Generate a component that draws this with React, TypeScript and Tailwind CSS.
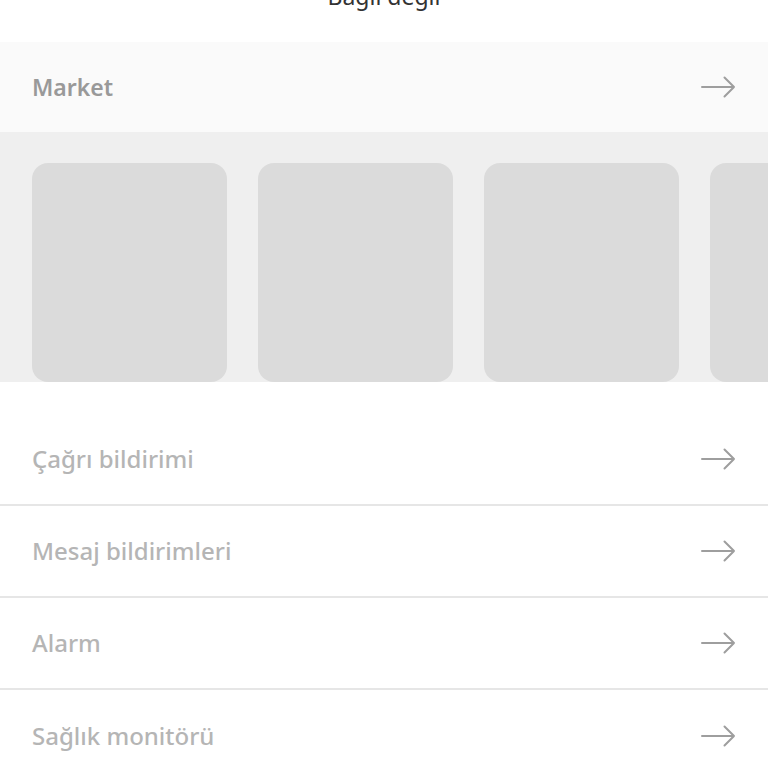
import React from 'react';

const font = { fontFamily: '"Noto Sans", Lato, sans-serif' };

const Arrow = () => (
  <svg width="35" height="22" viewBox="0 0 35 22" fill="none" className="shrink-0">
    <path d="M1 11H33M23.5 1.5L33 11L23.5 20.5" stroke="#9e9e9e" strokeWidth="2" strokeLinecap="round" strokeLinejoin="round" />
  </svg>
);

const items = ['Çağrı bildirimi', 'Mesaj bildirimleri', 'Alarm', 'Sağlık monitörü'];

export default function App() {
  return (
    <div className="w-[768px] h-[768px] overflow-hidden bg-white" style={font}>
      {/* header, mostly scrolled off */}
      <div className="h-[42px] overflow-hidden flex justify-center">
        <div className="-mt-[15px] text-[23px] leading-[22px] text-[#333333]">Bağlı değil</div>
      </div>

      <div className="h-[90px] bg-[#fafafa] flex items-center justify-between pl-8 pr-[32px]">
        <span className="text-[23px] font-semibold text-[#999999]">Market</span>
        <Arrow />
      </div>

      <div className="h-[250px] bg-[#efefef] pt-[31px] flex gap-[31px] pl-8 overflow-hidden">
        {[0, 1, 2, 3].map((i) => (
          <div key={i} className="w-[195px] h-[219px] shrink-0 rounded-2xl bg-[#dbdbdb]" />
        ))}
      </div>

      <div className="h-[32px]" />

      <div>
        {items.map((t, i) => (
          <div
            key={t}
            className={`h-[92px] flex items-center justify-between pl-8 pr-[32px] ${i < items.length - 1 ? 'border-b-2 border-[#e6e6e6]' : ''}`}
          >
            <span className="text-[24px] font-medium text-[#b5b5b5]">{t}</span>
            <Arrow />
          </div>
        ))}
      </div>
    </div>
  );
}
